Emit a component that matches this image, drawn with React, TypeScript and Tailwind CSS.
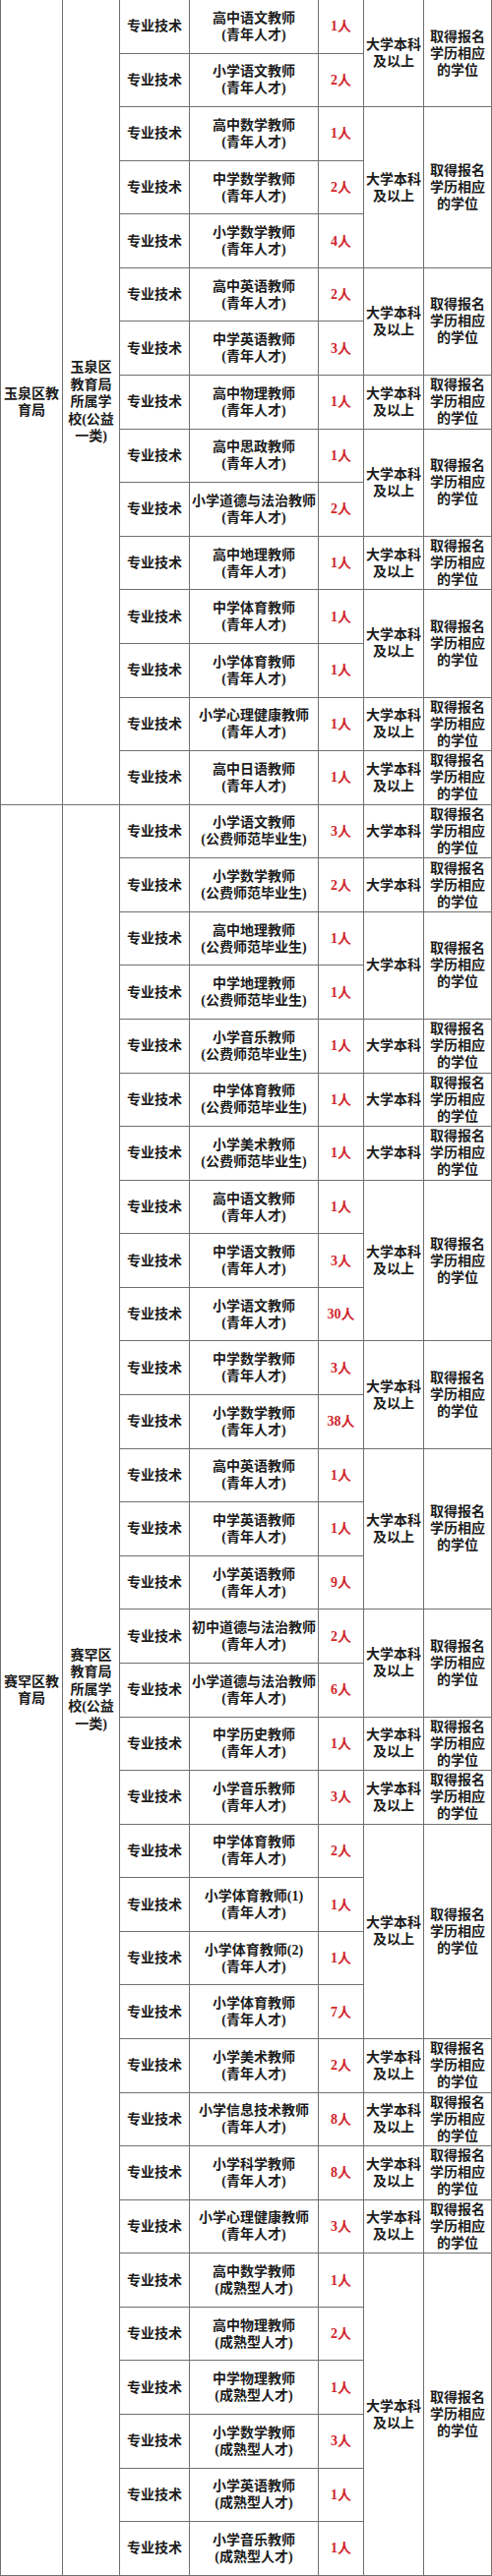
type Post = { name: string; sub: string; count: string };
type Block = { rows: Post[]; edu: "plus" | "plain" };
type Group = { area: string; unit: string[]; blocks: Block[] };

const QN = "青年人才";
const GF = "公费师范毕业生";
const CS = "成熟型人才";

const p = (name: string, sub: string, count: string): Post => ({ name, sub, count });

const groups: Group[] = [
  {
    area: "玉泉区教育局",
    unit: ["玉泉区", "教育局", "所属学", "校(公益", "一类)"],
    blocks: [
      { edu: "plus", rows: [p("高中语文教师", QN, "1"), p("小学语文教师", QN, "2")] },
      { edu: "plus", rows: [p("高中数学教师", QN, "1"), p("中学数学教师", QN, "2"), p("小学数学教师", QN, "4")] },
      { edu: "plus", rows: [p("高中英语教师", QN, "2"), p("中学英语教师", QN, "3")] },
      { edu: "plus", rows: [p("高中物理教师", QN, "1")] },
      { edu: "plus", rows: [p("高中思政教师", QN, "1"), p("小学道德与法治教师", QN, "2")] },
      { edu: "plus", rows: [p("高中地理教师", QN, "1")] },
      { edu: "plus", rows: [p("中学体育教师", QN, "1"), p("小学体育教师", QN, "1")] },
      { edu: "plus", rows: [p("小学心理健康教师", QN, "1")] },
      { edu: "plus", rows: [p("高中日语教师", QN, "1")] },
    ],
  },
  {
    area: "赛罕区教育局",
    unit: ["赛罕区", "教育局", "所属学", "校(公益", "一类)"],
    blocks: [
      { edu: "plain", rows: [p("小学语文教师", GF, "3")] },
      { edu: "plain", rows: [p("小学数学教师", GF, "2")] },
      { edu: "plain", rows: [p("高中地理教师", GF, "1"), p("中学地理教师", GF, "1")] },
      { edu: "plain", rows: [p("小学音乐教师", GF, "1")] },
      { edu: "plain", rows: [p("中学体育教师", GF, "1")] },
      { edu: "plain", rows: [p("小学美术教师", GF, "1")] },
      { edu: "plus", rows: [p("高中语文教师", QN, "1"), p("中学语文教师", QN, "3"), p("小学语文教师", QN, "30")] },
      { edu: "plus", rows: [p("中学数学教师", QN, "3"), p("小学数学教师", QN, "38")] },
      { edu: "plus", rows: [p("高中英语教师", QN, "1"), p("中学英语教师", QN, "1"), p("小学英语教师", QN, "9")] },
      { edu: "plus", rows: [p("初中道德与法治教师", QN, "2"), p("小学道德与法治教师", QN, "6")] },
      { edu: "plus", rows: [p("中学历史教师", QN, "1")] },
      { edu: "plus", rows: [p("小学音乐教师", QN, "3")] },
      {
        edu: "plus",
        rows: [
          p("中学体育教师", QN, "2"),
          p("小学体育教师(1)", QN, "1"),
          p("小学体育教师(2)", QN, "1"),
          p("小学体育教师", QN, "7"),
        ],
      },
      { edu: "plus", rows: [p("小学美术教师", QN, "2")] },
      { edu: "plus", rows: [p("小学信息技术教师", QN, "8")] },
      { edu: "plus", rows: [p("小学科学教师", QN, "8")] },
      { edu: "plus", rows: [p("小学心理健康教师", QN, "3")] },
      {
        edu: "plus",
        rows: [
          p("高中数学教师", CS, "1"),
          p("高中物理教师", CS, "2"),
          p("中学物理教师", CS, "1"),
          p("小学数学教师", CS, "3"),
          p("小学英语教师", CS, "1"),
          p("小学音乐教师", CS, "1"),
        ],
      },
    ],
  },
];

const cell = "border-r border-b border-[#707070] flex items-center justify-center text-center";

function PostRow({ post }: { post: Post }) {
  return (
    <div className="flex h-[54.58px]">
      <div className={`${cell} w-[71px]`}>专业技术</div>
      <div className={`${cell} w-[131px] flex-col`}>
        <span>{post.name}</span>
        <span>({post.sub})</span>
      </div>
      <div className={`${cell} w-[46px] text-[#d0262b]`}>
        <span className="font-bold">{post.count}</span>
        <span>人</span>
      </div>
    </div>
  );
}

function BlockRows({ block }: { block: Block }) {
  return (
    <div className="flex">
      <div className="flex flex-col w-[248px]">
        {block.rows.map((r, i) => (
          <PostRow key={i} post={r} />
        ))}
      </div>
      <div className={`${cell} w-[61px] flex-col`}>
        <span>大学本科</span>
        {block.edu === "plus" && <span>及以上</span>}
      </div>
      <div className={`${cell} w-[69px] flex-col`}>
        <span>取得报名</span>
        <span>学历相应</span>
        <span>的学位</span>
      </div>
    </div>
  );
}

export default function App() {
  return (
    <div
      className="w-[500px] bg-white border-l border-[#707070] text-[14px] leading-[17px] font-semibold text-[#1c1c1c]"
      style={{ fontFamily: '"Liberation Serif", "Noto Sans CJK SC", serif' }}
    >
      {groups.map((g) => (
        <div key={g.area} className="flex">
          <div className={`${cell} w-[63px] px-[3px]`}>{g.area}</div>
          <div className={`${cell} w-[58px] flex-col leading-[17.5px]`}>
            {g.unit.map((l) => (
              <span key={l} className="whitespace-nowrap">
                {l}
              </span>
            ))}
          </div>
          <div className="flex flex-col">
            {g.blocks.map((b, i) => (
              <BlockRows key={i} block={b} />
            ))}
          </div>
        </div>
      ))}
    </div>
  );
}
